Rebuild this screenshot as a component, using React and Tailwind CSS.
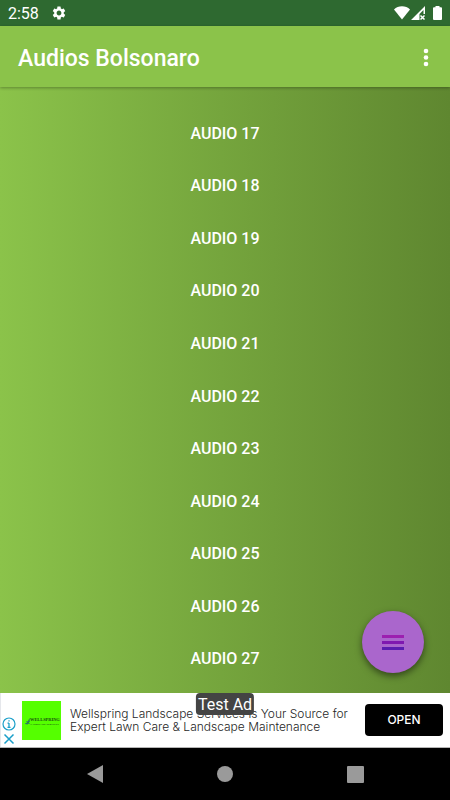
import React from "react";
import { MdSettings } from "react-icons/md";

const audios = [17, 18, 19, 20, 21, 22, 23, 24, 25, 26, 27];

const StatusBar = () => (
  <div className="flex h-[26px] shrink-0 items-center justify-between bg-[#2e6930] px-2 text-white">
    <div className="flex items-center gap-3">
      <span className="pt-0.5 text-base leading-5">2:58</span>
      <MdSettings className="size-4" />
    </div>

    <div className="flex items-center">
      {/* Wifi */}
      <svg viewBox="0 0 16 14" className="h-3.5 w-4" fill="currentColor">
        <path d="M8 13.5 0 3.5C2 1.4 5 .3 8 .3s6 1.1 8 3.2z" />
      </svg>

      {/* Signal, no connection */}
      <svg viewBox="0 0 15 14" className="ml-px h-3.5 w-[15px]" fill="currentColor">
        <path fillRule="evenodd" d="M0 14 14 0v8h-1.500V4L8.500 8v6z" />
        <path d="m9.500 9.500 4 4m0-4-4 4" stroke="currentColor" strokeWidth="1.500" />
      </svg>

      {/* Battery */}
      <svg viewBox="0 0 9 14" className="ml-[7px] h-3.5 w-[9px]" fill="currentColor">
        <path d="M2.500 0h4v1.200H8a1 1 0 0 1 1 1V13a1 1 0 0 1-1 1H1a1 1 0 0 1-1-1V2.200a1 1 0 0 1 1-1h1.500z" />
      </svg>
    </div>
  </div>
);

const Header = () => (
  <header className="relative z-10 flex h-[61px] shrink-0 items-center justify-between bg-[#8bc34a] pl-[18px] pr-3 pt-0.5 text-white shadow-[0_1px_3px_rgba(0,0,0,0.3)]">
    <h1 className="pt-0.5 text-[23px] font-medium leading-8">Audios Bolsonaro</h1>
    <button type="button" aria-label="More options" className="flex h-8 w-6 items-center justify-center">
      <svg viewBox="0 0 6 20" className="h-5 w-1.5" fill="currentColor">
        <circle cx="3" cy="3" r="2.300" />
        <circle cx="3" cy="9.500" r="2.300" />
        <circle cx="3" cy="16" r="2.300" />
      </svg>
    </button>
  </header>
);

const AudioList = () => (
  <main className="relative flex flex-1 flex-col bg-linear-to-r from-[#8bc34a] to-[#5f8730] pb-2 pt-5">
    {audios.map((n) => (
      <button key={n} type="button" className="min-h-12 w-full flex-1 pt-px text-base font-medium uppercase leading-5 text-white">
        Audio {n}
      </button>
    ))}

    {/* Floating menu button */}
    <button
      type="button"
      aria-label="Menu"
      className="absolute bottom-5 right-[26px] flex size-[62px] items-center justify-center rounded-full bg-[#aa66cc] shadow-[0_3px_7px_rgba(0,0,0,0.5)]"
    >
      <svg viewBox="0 0 22 15" className="h-[15px] w-[22px]">
        <path d="M0 0h22v3H0z" fill="#9c1fb0" />
        <path d="M0 6h22v3H0z" fill="#7f18b0" />
        <path d="M0 12h22v3H0z" fill="#5a1cb0" />
      </svg>
    </button>
  </main>
);

const AdBanner = () => (
  <aside className="relative flex h-[55px] shrink-0 items-center border-b border-[#b5b5b5] bg-white pr-[7px]">
    <div className="flex h-full w-[22px] flex-col items-center justify-end gap-0.5 border-l border-gray-200 pb-0.5 pr-1.5 text-[#1a9fc9]">
      <button type="button" aria-label="Ad information">
        <svg viewBox="0 0 14 14" className="size-3.5" fill="none" stroke="currentColor">
          <circle cx="7" cy="7" r="6" strokeWidth="1.200" />
          <path d="M7 6v4.500M5.500 6.200H7M5.500 10.300h3M7 3.200v1.300" strokeWidth="1.300" />
        </svg>
      </button>
      <button type="button" aria-label="Close ad">
        <svg viewBox="0 0 12 12" className="size-3" fill="none" stroke="currentColor" strokeWidth="1.500">
          <path d="m1.500 1.500 9 9m0-9-9 9" />
        </svg>
      </button>
    </div>

    {/* Advertiser logo */}
    <svg viewBox="0 0 39 39" className="size-[39px] shrink-0">
      <path d="M0 0h39v39H0z" fill="#55ff00" />
      <path d="M3 23c2-1 3-3 4.500-6 .8 2 0 5-2 6.500z" fill="#238a3a" />
      <path d="M4 20.500h4M3 22.500h5" stroke="#2d7080" strokeWidth=".6" />
      <g fill="#174a12" fontFamily="Liberation Serif, serif" fontWeight="700">
        <text x="8" y="19.500" fontSize="4.400">WELLSPRING</text>
        <text x="8.500" y="23.500" fontSize="2.500">LANDSCAPE SERVICES</text>
      </g>
    </svg>

    <p className="ml-[9px] min-w-0 flex-1 font-[Inter,sans-serif] text-xs font-light leading-[13px] text-[#1f1f1f]">
      Wellspring Landscape Services is Your Source for Expert Lawn Care &amp; Landscape Maintenance
    </p>
    <button type="button" className="h-8 w-[78px] shrink-0 rounded bg-black font-[Inter,sans-serif] text-xs font-medium text-white">
      OPEN
    </button>

    <span className="absolute left-1/2 top-0 -translate-x-1/2 whitespace-nowrap rounded-sm bg-[#444444] px-0.5 pt-px text-base leading-[21px] text-white">
      Test Ad
    </span>
  </aside>
);

const NavBar = () => (
  <nav className="flex h-[52px] shrink-0 items-center justify-center gap-[114px] bg-black text-[#9a9a9a]">
    <button type="button" aria-label="Back">
      <svg viewBox="0 0 16 18" className="h-[18px] w-4" fill="currentColor">
        <path d="M0 9 16 0v18z" />
      </svg>
    </button>
    <button type="button" aria-label="Home">
      <svg viewBox="0 0 16 16" className="size-4" fill="currentColor">
        <circle cx="8" cy="8" r="8" />
      </svg>
    </button>
    <button type="button" aria-label="Recent apps">
      <svg viewBox="0 0 17 17" className="size-[17px]" fill="currentColor">
        <rect width="17" height="17" rx="1" />
      </svg>
    </button>
  </nav>
);

const App = () => {
  return (
    <div className="flex min-h-screen w-full flex-col font-[Roboto,sans-serif]">
      <StatusBar />
      <Header />
      <AudioList />
      <AdBanner />
      <NavBar />
    </div>
  );
};

export default App;
